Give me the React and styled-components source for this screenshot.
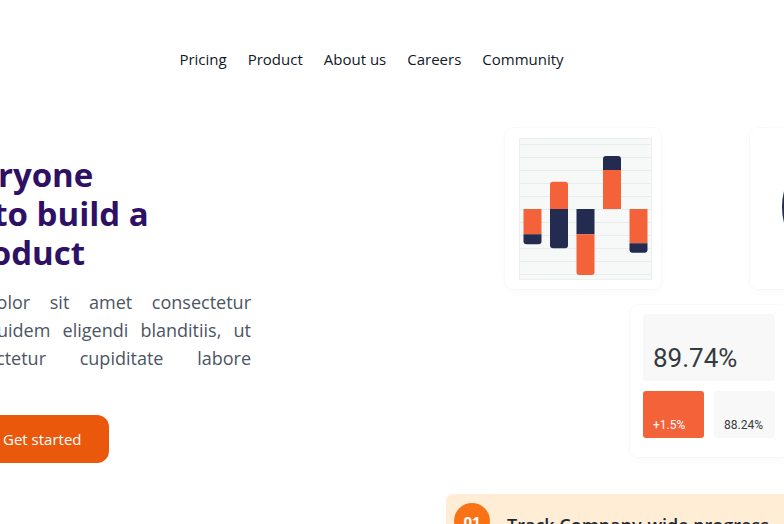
import React from "react";
import styled, { createGlobalStyle } from "styled-components";

const ORANGE = "#f4623a";
const NAVY = "#232b50";

const GlobalStyle = createGlobalStyle`
  html, body {
    margin: 0;
    padding: 0;
    background: #ffffff;
  }
  body {
    overflow: hidden;
    font-family: "Open Sans", "Noto Sans", sans-serif;
  }
`;

const Page = styled.div`
  display: flex;
  justify-content: center;
  width: 100%;
  overflow: hidden;
`;

const Frame = styled.div`
  flex: none;
  width: 1280px;
  padding: 0 88px;
  box-sizing: border-box;
`;

const Nav = styled.nav`
  height: 72px;
  margin-top: 23px;
  display: flex;
  align-items: center;
  justify-content: space-between;
`;

const Logo = styled.div`
  width: 114px;
  font-size: 20px;
  font-weight: 700;
  color: #2e1065;
`;

const Links = styled.ul`
  display: flex;
  gap: 21px;
  margin: 0;
  padding: 0;
  list-style: none;
`;

const LinkItem = styled.li`
  font-size: 15px;
  color: #111827;
  cursor: pointer;
`;

const NavActions = styled.div`
  width: 155px;
  display: flex;
  justify-content: flex-end;
`;

const SignIn = styled.button`
  border: 0;
  background: #2e1065;
  color: #fff;
  font: 600 14px "Open Sans", sans-serif;
  padding: 10px 18px;
  border-radius: 10px;
`;

const Hero = styled.section`
  display: flex;
  justify-content: space-between;
  align-items: flex-start;
  height: 385px;
  padding: 25px 24px 0 0;
  box-sizing: border-box;
`;

const HeroText = styled.div`
  width: 411px;
  margin-top: 35px;
`;

const Title = styled.h1`
  margin: 0;
  font-size: 33px;
  line-height: 39px;
  font-weight: 700;
  color: #2e1065;
`;

const TitleLine = styled.span`
  display: block;
`;

const Lead = styled.p`
  margin: 16px 0 0;
  font-size: 18px;
  line-height: 28px;
  color: #4b5563;
`;

const LeadLine = styled.span`
  display: block;
  text-align: justify;
  text-align-last: ${(p) => (p.$last ? "left" : "justify")};
`;

const Actions = styled.div`
  margin-top: 15px;
  display: flex;
  align-items: center;
  gap: 12px;
`;

const Secondary = styled.a`
  width: 123px;
  font-size: 15px;
  color: #2e1065;
  text-decoration: underline;
`;

const Primary = styled.button`
  height: 48px;
  padding: 0 28px;
  border: 0;
  border-radius: 12px;
  background: #ea580c;
  color: #fff;
  font: 400 15px "Open Sans", sans-serif;
  cursor: pointer;
`;

const Illustration = styled.div`
  position: relative;
  flex: none;
  width: 440px;
  height: 360px;
`;

const FloatCard = styled.div`
  position: absolute;
  left: ${(p) => p.$x}px;
  top: ${(p) => p.$y}px;
  width: ${(p) => p.$w}px;
  height: ${(p) => p.$h}px;
  background: #fff;
  border-radius: 8px;
  box-shadow: 0 0 0 1px rgba(15, 23, 42, 0.018), 0 3px 10px rgba(15, 23, 42, 0.025);
  box-sizing: border-box;
`;

const ChartPad = styled.div`
  padding: 11px 10px 10px 15px;
`;

const ChartArea = styled.div`
  width: 131px;
  height: 140px;
  background: #f7f8f8;
  box-shadow: 0 0 0 1px #eef0f0;
`;

const Donut = styled.svg`
  position: absolute;
  left: 32px;
  top: 19px;
`;

const StatBody = styled.div`
  padding: 9px 13px;
  display: flex;
  flex-direction: column;
  gap: 10px;
  font-family: Roboto, "Liberation Sans", sans-serif;
`;

const BigStat = styled.div`
  height: 67px;
  display: flex;
  align-items: flex-end;
  padding: 0 10px 8px;
  box-sizing: border-box;
  background: #f8f8f8;
  border-radius: 3px;
  font-size: 26px;
  line-height: 30px;
  color: #343a40;
`;

const StatRow = styled.div`
  display: flex;
  gap: 10px;
`;

const SmallStat = styled.div`
  width: 61px;
  height: 47px;
  display: flex;
  align-items: flex-end;
  padding: 0 10px 6px;
  box-sizing: border-box;
  border-radius: 3px;
  font-size: 12px;
  line-height: 14px;
  background: ${(p) => (p.$accent ? ORANGE : "#f8f8f8")};
  color: ${(p) => (p.$accent ? "#fff" : "#343a40")};
`;

const Features = styled.section`
  display: flex;
  justify-content: flex-end;
  padding: 14px 24px 0 0;
`;

const FeatureList = styled.div`
  width: 474px;
  display: flex;
  flex-direction: column;
  gap: 16px;
`;

const FeatureCard = styled.div`
  display: flex;
  gap: 17px;
  align-items: flex-start;
  padding: 9px 8px 24px;
  background: #ffedd5;
  border-radius: 8px;
`;

const Step = styled.div`
  flex: none;
  width: 36px;
  height: 36px;
  border-radius: 50%;
  background: #f97316;
  color: #fff;
  font-size: 15px;
  font-weight: 700;
  display: flex;
  align-items: center;
  justify-content: center;
`;

const FeatureTitle = styled.div`
  padding-top: 10px;
  font-size: 18px;
  font-weight: 600;
  color: #1f2937;
`;

const FeatureText = styled.div`
  margin-top: 6px;
  font-size: 15px;
  color: #4b5563;
`;

const barPath = (x, y1, y2, w, r, top, bottom) => {
  const rt = top ? r : 0;
  const rb = bottom ? r : 0;
  return `M${x},${y1 + rt} A${rt},${rt} 0 0 1 ${x + rt},${y1} L${x + w - rt},${y1} A${rt},${rt} 0 0 1 ${x + w},${y1 + rt} L${x + w},${y2 - rb} A${rb},${rb} 0 0 1 ${x + w - rb},${y2} L${x + rb},${y2} A${rb},${rb} 0 0 1 ${x},${y2 - rb} Z`;
};

const bars = [
  { x: 3.5, parts: [[70, 95.3, ORANGE, 0, 0], [95.3, 105.3, NAVY, 0, 1]] },
  { x: 30, parts: [[42.7, 70, ORANGE, 1, 0], [70, 109.3, NAVY, 0, 1]] },
  { x: 56.5, parts: [[70, 95.3, NAVY, 0, 0], [95.3, 136, ORANGE, 0, 1]] },
  { x: 83, parts: [[17, 31, NAVY, 1, 0], [31, 70, ORANGE, 0, 0]] },
  { x: 109.5, parts: [[70, 104.3, ORANGE, 0, 0], [104.3, 113.7, NAVY, 0, 1]] },
];

const gridLines = Array.from({ length: 11 }, (_, i) => 5 + i * 13);

const BarChart = () => (
  <svg width="131" height="140" viewBox="0 0 131 140">
    {gridLines.map((y) => (
      <line key={y} x1="0" x2="131" y1={y + 0.5} y2={y + 0.5} stroke="#e9ecec" strokeWidth="1" />
    ))}
    {bars.map((b) =>
      b.parts.map(([y1, y2, c, t, btm], i) => (
        <path key={`${b.x}-${i}`} d={barPath(b.x, y1, y2, 18, 3, t, btm)} fill={c} />
      ))
    )}
  </svg>
);

const links = ["Pricing", "Product", "About us", "Careers", "Community"];

export default function App() {
  return (
    <>
      <GlobalStyle />
      <Page>
        <Frame>
          <Nav>
            <Logo>Manage</Logo>
            <Links>
              {links.map((l) => (
                <LinkItem key={l}>{l}</LinkItem>
              ))}
            </Links>
            <NavActions>
              <SignIn>Sign in</SignIn>
            </NavActions>
          </Nav>

          <Hero>
            <HeroText>
              <Title>
                <TitleLine>Allow everyone</TitleLine>
                <TitleLine>planning to build a</TitleLine>
                <TitleLine>a solid product</TitleLine>
              </Title>
              <Lead>
                <LeadLine>Lorem ipsum dolor sit amet consectetur</LeadLine>
                <LeadLine>adipisicing elit. Quidem eligendi blanditiis, ut</LeadLine>
                <LeadLine>Voluptas consectetur cupiditate labore</LeadLine>
                <LeadLine $last>nihil.</LeadLine>
              </Lead>
              <Actions>
                <Secondary>Learn more</Secondary>
                <Primary>Get started</Primary>
              </Actions>
            </HeroText>

            <Illustration>
              <FloatCard $x={25} $y={8} $w={156} $h={161}>
                <ChartPad>
                  <ChartArea>
                    <BarChart />
                  </ChartArea>
                </ChartPad>
              </FloatCard>

              <FloatCard $x={270} $y={8} $w={170} $h={161}>
                <Donut width="120" height="120" viewBox="0 0 120 120">
                  <circle cx="60" cy="60" r="52" fill="none" stroke={NAVY} strokeWidth="16" />
                  <circle
                    cx="60"
                    cy="60"
                    r="52"
                    fill="none"
                    stroke={ORANGE}
                    strokeWidth="16"
                    strokeDasharray="110 327"
                    transform="rotate(-60 60 60)"
                  />
                </Donut>
              </FloatCard>

              <FloatCard $x={150} $y={185} $w={158} $h={152}>
                <StatBody>
                  <BigStat>89.74%</BigStat>
                  <StatRow>
                    <SmallStat $accent>+1.5%</SmallStat>
                    <SmallStat>88.24%</SmallStat>
                  </StatRow>
                </StatBody>
              </FloatCard>
            </Illustration>
          </Hero>

          <Features>
            <FeatureList>
              <FeatureCard>
                <Step>01</Step>
                <div>
                  <FeatureTitle>Track Company-wide progress</FeatureTitle>
                  <FeatureText>See how your day-to-day tasks fit into the wider vision.</FeatureText>
                </div>
              </FeatureCard>
            </FeatureList>
          </Features>
        </Frame>
      </Page>
    </>
  );
}
